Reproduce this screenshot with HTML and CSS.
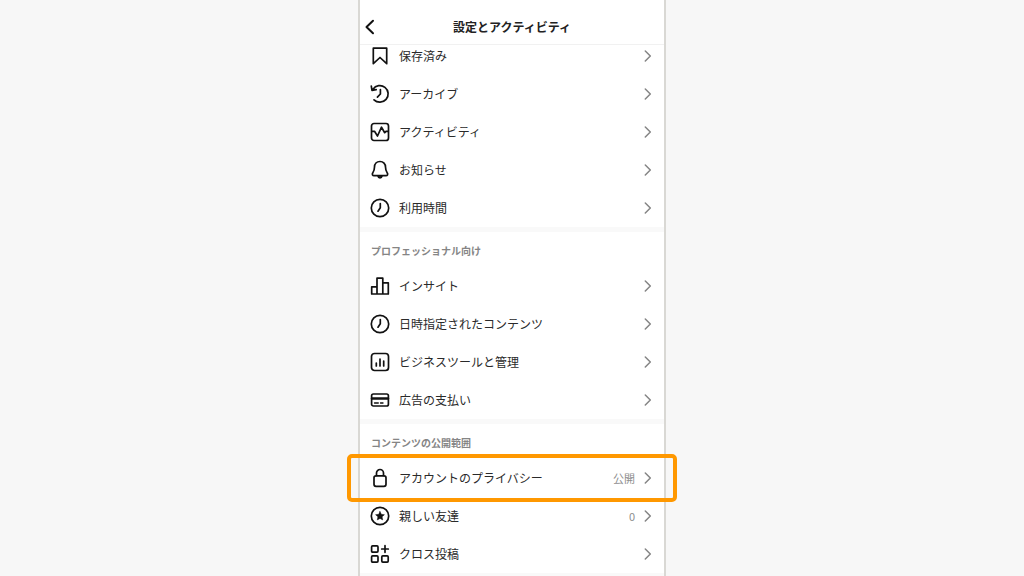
FILE: index.html
```html
<!DOCTYPE html>
<html lang="ja">
<head>
<meta charset="utf-8">
<meta name="viewport" content="width=device-width, initial-scale=1">
<title>設定とアクティビティ</title>
<link rel="stylesheet" href="styles.css">
</head>
<body>
<svg class="sprite" aria-hidden="true">
  <symbol id="chevron" viewBox="0 0 8 12"><path d="M1.300 1 6.300 6l-5 5"/></symbol>
  <symbol id="clock" viewBox="0 0 20 20"><circle cx="10" cy="10" r="8.700"/><path d="M10.300 5.500V9.800L8 13.200"/></symbol>
</svg>
<main class="phone">
  <header class="topbar">
    <button class="back" type="button" aria-label="戻る"><svg viewBox="0 0 10 16"><path d="M8 1.700 1.500 8 8 14.300"/></svg></button>
    <h1 class="title">設定とアクティビティ</h1>
  </header>
  <div class="content">
    <section class="group">
      <a class="row" href="#"><svg class="icon" viewBox="0 0 20 20"><path d="M3.300 2.200h13.400v15.500L10 11.500l-6.700 6.200z"/></svg><span class="label">保存済み</span><svg class="chevron"><use href="#chevron"/></svg></a>
      <a class="row" href="#"><svg class="icon" viewBox="0 0 20 20"><path d="M3 5.200A8.300 8.300 0 1 1 4 15.800M1.300 2.200 2 6.300 6.200 5.600M10.400 5.500V10L7.400 13.200"/></svg><span class="label">アーカイブ</span><svg class="chevron"><use href="#chevron"/></svg></a>
      <a class="row" href="#"><svg class="icon" viewBox="0 0 20 20"><rect x="1.500" y="1.500" width="17" height="17" rx="2.500"/><path d="M1.800 9.300h2.700l3 4.700 4-8.800 3.200 5.500 1.300-1.400h2.200"/></svg><span class="label">アクティビティ</span><svg class="chevron"><use href="#chevron"/></svg></a>
      <a class="row" href="#"><svg class="icon" viewBox="0 0 20 20"><path d="M10 1.500c-3.400 0-5.500 2.500-5.500 5.600 0 3.200-.9 4.400-1.800 5.900-.8 1.300-.2 2.600 1.300 2.600h12c1.500 0 2.100-1.300 1.300-2.600-.9-1.500-1.800-2.700-1.800-5.900 0-3.100-2.100-5.600-5.500-5.600z"/><path d="M8 16c.3 2.400 3.700 2.400 4 0z"/></svg><span class="label">お知らせ</span><svg class="chevron"><use href="#chevron"/></svg></a>
      <a class="row" href="#"><svg class="icon"><use href="#clock"/></svg><span class="label">利用時間</span><svg class="chevron"><use href="#chevron"/></svg></a>
    </section>
    <section class="group">
      <h2 class="heading">プロフェッショナル向け</h2>
      <a class="row" href="#"><svg class="icon" viewBox="0 0 20 20"><path d="M1.700 18V10.800H7V18zM7 18V2.200h5.800V18zM12.800 18V6.800h5.500V18z"/></svg><span class="label">インサイト</span><svg class="chevron"><use href="#chevron"/></svg></a>
      <a class="row" href="#"><svg class="icon"><use href="#clock"/></svg><span class="label">日時指定されたコンテンツ</span><svg class="chevron"><use href="#chevron"/></svg></a>
      <a class="row" href="#"><svg class="icon" viewBox="0 0 20 20"><rect x="1.500" y="1.500" width="17" height="17" rx="3"/><path d="M6.300 11v3M10 7v7M13.700 9v5"/></svg><span class="label">ビジネスツールと管理</span><svg class="chevron"><use href="#chevron"/></svg></a>
      <a class="row" href="#"><svg class="icon" viewBox="0 0 20 20"><rect x="1.600" y="4" width="16.800" height="12" rx="1.800"/><path class="thick" d="M2 8.500h16"/><path class="thin" d="M4.500 13h3.800M10.500 13h2.500"/></svg><span class="label">広告の支払い</span><svg class="chevron"><use href="#chevron"/></svg></a>
    </section>
    <section class="group">
      <h2 class="heading">コンテンツの公開範囲</h2>
      <a class="row highlighted" href="#"><svg class="icon" viewBox="0 0 20 20"><rect x="4" y="7.800" width="12" height="10.500" rx="2"/><path d="M6.500 7.500V5a3.500 3.500 0 0 1 7 0v2.500"/></svg><span class="label">アカウントのプライバシー</span><span class="value">公開</span><svg class="chevron"><use href="#chevron"/></svg></a>
      <a class="row" href="#"><svg class="icon" viewBox="0 0 20 20"><circle cx="10" cy="10" r="8.700"/><path class="solid" d="m10 5.500 1.300 2.800 3.100.4-2.300 2.100.6 3.100L10 12.400l-2.700 1.500.6-3.100-2.300-2.100 3.100-.4z"/></svg><span class="label">親しい友達</span><span class="value">0</span><svg class="chevron"><use href="#chevron"/></svg></a>
      <a class="row" href="#"><svg class="icon" viewBox="0 0 20 20"><rect x="1.600" y="1.900" width="6.400" height="6.200" rx="1"/><rect x="1.600" y="11.900" width="6.400" height="6.200" rx="1"/><rect x="11.800" y="11.900" width="6.400" height="6.200" rx="1"/><path d="M15 1.700v6.600M11.700 5h6.600"/></svg><span class="label">クロス投稿</span><svg class="chevron"><use href="#chevron"/></svg></a>
    </section>
    <section class="group"></section>
  </div>
</main>
</body>
</html>
```
FILE: styles.css
```css
* { box-sizing: border-box; }

body {
  margin: 0;
  background: #f7f7f7;
  color: #2a2a2a;
  font-family: "Noto Sans CJK JP", sans-serif;
  font-size: 12px;
  line-height: 18px;
}

.sprite { position: absolute; width: 0; height: 0; }

svg {
  flex: none;
  fill: none;
  stroke: currentColor;
  stroke-width: 1.7;
  stroke-linecap: round;
  stroke-linejoin: round;
}

.phone {
  display: flex;
  flex-direction: column;
  max-width: 308px;
  height: 100vh;
  margin: 0 auto;
  border: solid #d9d8d4;
  border-width: 0 2px;
  background: #fff;
}

.topbar {
  display: grid;
  grid-template-columns: 20px 1fr 20px;
  align-items: center;
  flex: none;
  padding: 18px 0 8px;
  border-bottom: 1px solid #f1f1f1;
  background: #fff;
  z-index: 1;
}

.back {
  display: flex;
  justify-content: center;
  padding: 0;
  border: 0;
  background: none;
  color: #111;
}

.back svg { width: 10px; height: 16px; stroke-width: 2; }

.title {
  margin: 0;
  font-size: 12px;
  line-height: 18px;
  font-weight: 700;
  text-align: center;
  color: #222;
}

.content { flex: 1; min-height: 0; margin-top: -8px; }

.group + .group { border-top: 5px solid #f9f9f9; }

.heading {
  margin: 0;
  padding: 11px 11px 8px;
  color: #858585;
  font-size: 10px;
  line-height: 16px;
  font-weight: 700;
}

.row {
  position: relative;
  display: flex;
  align-items: center;
  padding: 10px 12px 10px 10px;
  color: inherit;
  text-decoration: none;
}

.icon {
  width: 20px;
  height: 20px;
  margin: -1px 9px -1px 0;
  color: #111;
}

.label { flex: 1; }

.value { margin-right: 9px; color: #8e8e8e; font-size: 11px; }

.chevron { width: 8px; height: 12px; color: #858585; stroke-width: 1.5; }

.thick { stroke-width: 2.4; }
.thin { stroke-width: 1.3; }
.solid { fill: currentColor; stroke-width: 0.5; }

.highlighted::after {
  content: "";
  position: absolute;
  inset: -5px -13px;
  border: 4px solid #ff9800;
  border-radius: 5px;
}
```
